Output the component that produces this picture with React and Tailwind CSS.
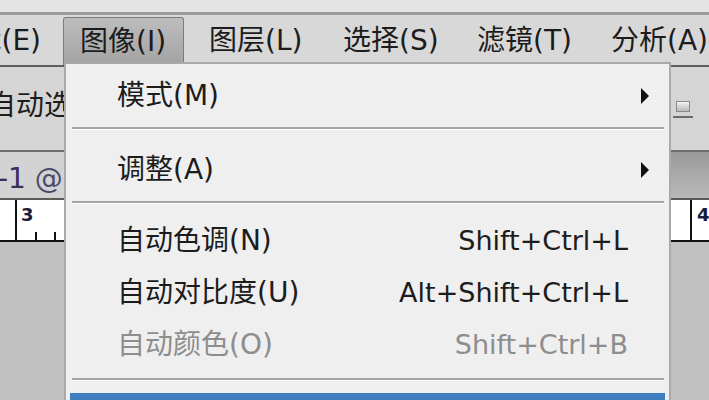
import React from 'react';

const FONT = { fontFamily: '"DejaVu Sans", "Noto Sans CJK SC", sans-serif' };

function MenuBar() {
  const items = ['图层(L)', '选择(S)', '滤镜(T)', '分析(A)'];
  return (
    <div className="flex h-[53px] bg-[#d8d8d8] border-t-[3px] border-[#9c9c9c] text-[28px] text-[#1c1c1c] overflow-hidden whitespace-nowrap">
      <div className="w-[63px] flex justify-end items-center pr-[22px] pt-[2px] overflow-hidden shrink-0">
        <span>编辑(E)</span>
      </div>
      <div className="w-[121px] shrink-0 mt-[2px] pl-[16px] flex items-center bg-gradient-to-b from-[#bdbdbd] to-[#a3a3a3] border border-b-0 border-[#7c7c7c] rounded-t-[3px]">
        <span>图像(I)</span>
      </div>
      {items.map((t) => (
        <div key={t} className="w-[134px] shrink-0 pl-[25px] pt-[2px] flex items-center">
          <span>{t}</span>
        </div>
      ))}
    </div>
  );
}

function Toolbar() {
  return (
    <div className="h-[85px] bg-[#d5d5d5] border-t-2 border-[#5f5f5f] flex items-center justify-between text-[28px] text-[#1c1c1c] whitespace-nowrap overflow-hidden">
      <span className="ml-[-12px] mt-[-6px]">自动选</span>
      <div className="flex flex-col items-center mr-[16px] mt-[2px]">
        <div className="w-[14px] h-[11px] border border-[#8a8a8a] bg-gradient-to-b from-[#f4f4f4] to-[#b8b8b8]" />
        <div className="w-[20px] h-[2px] bg-[#6a6a6a] mt-[4px]" />
      </div>
    </div>
  );
}

function TabBar() {
  return (
    <div className="h-[48px] border-t-2 border-[#6f6f6f] flex text-[28px] whitespace-nowrap overflow-hidden">
      <div className="w-[400px] bg-[#d3d3d3] flex items-center pt-[8px]">
        <span className="ml-[-2px] text-[#3b2e5c]">-1 <span className="text-[#4a4a6a]">@</span></span>
      </div>
      <div className="flex-1 bg-gradient-to-b from-[#9a9a9a] to-[#b9b9b9]" />
    </div>
  );
}

function Ruler() {
  return (
    <div className="h-[44px] bg-white border-t-2 border-[#5a5a5a] border-b-2 border-b-[#111] flex justify-between text-[18px] font-bold text-[#1a1a3a]">
      <div className="flex h-full">
        <div className="w-[15px]" />
        <div className="w-[2px] h-full bg-[#111]" />
        <div className="relative w-[46px] h-full">
          <span className="absolute left-[4px] top-[1px]" style={{ fontFamily: '"DejaVu Sans", sans-serif' }}>3</span>
          <div className="absolute left-[18px] bottom-0 w-[2px] h-[8px] bg-[#111]" />
          <div className="absolute left-[37px] bottom-0 w-[2px] h-[8px] bg-[#111]" />
        </div>
      </div>
      <div className="flex h-full">
        <div className="w-[2px] h-full bg-[#111]" />
        <div className="w-[17px] pl-[5px] pt-[1px]" style={{ fontFamily: '"DejaVu Sans", sans-serif' }}>4</div>
      </div>
    </div>
  );
}

function Separator() {
  return (
    <div className="mx-[6px] mr-[5px]">
      <div className="h-[2px] bg-[#a5a5a5]" />
      <div className="h-[1px] bg-white" />
    </div>
  );
}

function Arrow() {
  return (
    <svg width="10" height="16" viewBox="0 0 10 16" className="absolute right-[19px]">
      <path d="M1 0 L9 8 L1 16 Z" fill="#111" />
    </svg>
  );
}

function Item({ label, shortcut, disabled, submenu, className = '' }) {
  return (
    <div className={`relative flex items-center pl-[51px] pr-[41px] ${className} ${disabled ? 'text-[#8d8d8d]' : 'text-[#1c1c1c]'}`}>
      <span className="flex-1">{label}</span>
      {shortcut && <span className="text-[27px]">{shortcut}</span>}
      {submenu && <Arrow />}
    </div>
  );
}

function Dropdown() {
  return (
    <div className="absolute left-[64px] top-[62px] w-[607px] bottom-0 bg-[#efefef] border-t-2 border-x-2 border-[#a9a9a9] text-[28px] whitespace-nowrap" style={FONT}>
      <Item label="模式(M)" submenu className="h-[63px]" />
      <Separator />
      <Item label="调整(A)" submenu className="h-[71px] pt-[8px]" />
      <Separator />
      <div className="h-[11px]" />
      <Item label="自动色调(N)" shortcut="Shift+Ctrl+L" className="h-[52px]" />
      <Item label="自动对比度(U)" shortcut="Alt+Shift+Ctrl+L" className="h-[52px]" />
      <Item label="自动颜色(O)" shortcut="Shift+Ctrl+B" disabled className="h-[52px]" />
      <div className="h-[7px]" />
      <Separator />
      <div className="h-[12px]" />
      <div className="ml-[4px] mr-[4px] h-[40px] bg-[#3f7fbf]" />
    </div>
  );
}

export default function App() {
  return (
    <div className="relative w-[709px] h-[400px] overflow-hidden bg-[#c1c1c1]" style={FONT}>
      <div className="h-[12px] bg-[#e4e4e4]" />
      <MenuBar />
      <Toolbar />
      <TabBar />
      <Ruler />
      <Dropdown />
    </div>
  );
}
